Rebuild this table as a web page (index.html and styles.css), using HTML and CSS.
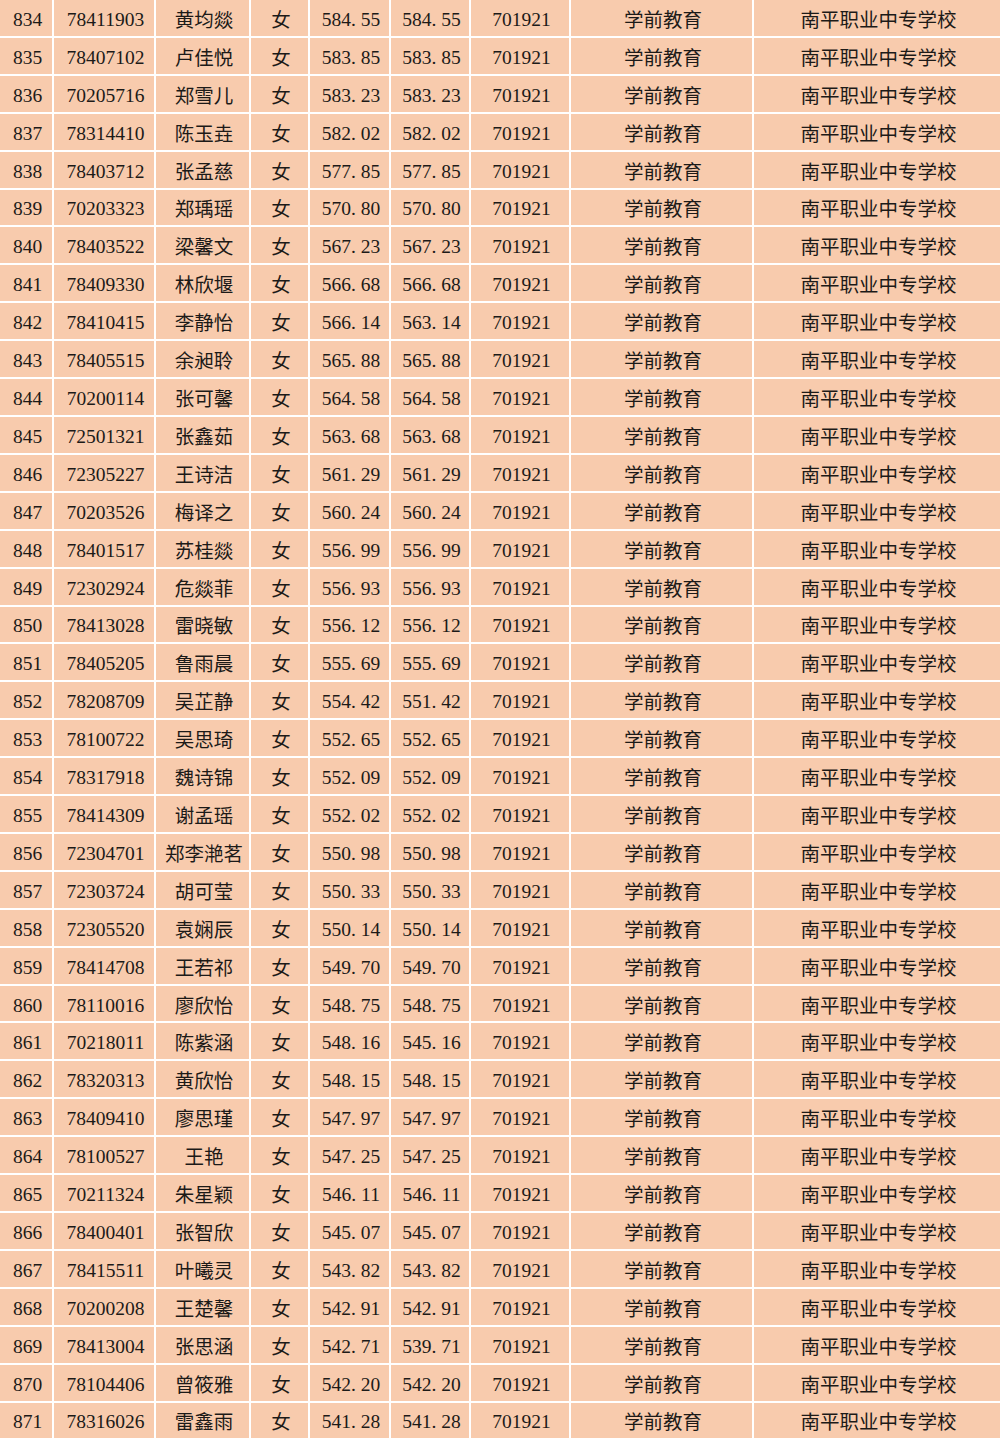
FILE: index.html
```html
<!DOCTYPE html>
<html lang="zh-CN">
<head>
<meta charset="utf-8">
<title>录取名单</title>
<link rel="stylesheet" href="styles.css">
</head>
<body>
<div class="sheet">
<div class="c n">834</div><div class="c n">78411903</div><div class="c z">黄均燚</div><div class="c z">女</div><div class="c n">584<span class="p">.</span>55</div><div class="c n">584<span class="p">.</span>55</div><div class="c n">701921</div><div class="c z">学前教育</div><div class="c z">南平职业中专学校</div>
<div class="c n">835</div><div class="c n">78407102</div><div class="c z">卢佳悦</div><div class="c z">女</div><div class="c n">583<span class="p">.</span>85</div><div class="c n">583<span class="p">.</span>85</div><div class="c n">701921</div><div class="c z">学前教育</div><div class="c z">南平职业中专学校</div>
<div class="c n">836</div><div class="c n">70205716</div><div class="c z">郑雪儿</div><div class="c z">女</div><div class="c n">583<span class="p">.</span>23</div><div class="c n">583<span class="p">.</span>23</div><div class="c n">701921</div><div class="c z">学前教育</div><div class="c z">南平职业中专学校</div>
<div class="c n">837</div><div class="c n">78314410</div><div class="c z">陈玉垚</div><div class="c z">女</div><div class="c n">582<span class="p">.</span>02</div><div class="c n">582<span class="p">.</span>02</div><div class="c n">701921</div><div class="c z">学前教育</div><div class="c z">南平职业中专学校</div>
<div class="c n">838</div><div class="c n">78403712</div><div class="c z">张孟慈</div><div class="c z">女</div><div class="c n">577<span class="p">.</span>85</div><div class="c n">577<span class="p">.</span>85</div><div class="c n">701921</div><div class="c z">学前教育</div><div class="c z">南平职业中专学校</div>
<div class="c n">839</div><div class="c n">70203323</div><div class="c z">郑瑀瑶</div><div class="c z">女</div><div class="c n">570<span class="p">.</span>80</div><div class="c n">570<span class="p">.</span>80</div><div class="c n">701921</div><div class="c z">学前教育</div><div class="c z">南平职业中专学校</div>
<div class="c n">840</div><div class="c n">78403522</div><div class="c z">梁馨文</div><div class="c z">女</div><div class="c n">567<span class="p">.</span>23</div><div class="c n">567<span class="p">.</span>23</div><div class="c n">701921</div><div class="c z">学前教育</div><div class="c z">南平职业中专学校</div>
<div class="c n">841</div><div class="c n">78409330</div><div class="c z">林欣堰</div><div class="c z">女</div><div class="c n">566<span class="p">.</span>68</div><div class="c n">566<span class="p">.</span>68</div><div class="c n">701921</div><div class="c z">学前教育</div><div class="c z">南平职业中专学校</div>
<div class="c n">842</div><div class="c n">78410415</div><div class="c z">李静怡</div><div class="c z">女</div><div class="c n">566<span class="p">.</span>14</div><div class="c n">563<span class="p">.</span>14</div><div class="c n">701921</div><div class="c z">学前教育</div><div class="c z">南平职业中专学校</div>
<div class="c n">843</div><div class="c n">78405515</div><div class="c z">余昶聆</div><div class="c z">女</div><div class="c n">565<span class="p">.</span>88</div><div class="c n">565<span class="p">.</span>88</div><div class="c n">701921</div><div class="c z">学前教育</div><div class="c z">南平职业中专学校</div>
<div class="c n">844</div><div class="c n">70200114</div><div class="c z">张可馨</div><div class="c z">女</div><div class="c n">564<span class="p">.</span>58</div><div class="c n">564<span class="p">.</span>58</div><div class="c n">701921</div><div class="c z">学前教育</div><div class="c z">南平职业中专学校</div>
<div class="c n">845</div><div class="c n">72501321</div><div class="c z">张鑫茹</div><div class="c z">女</div><div class="c n">563<span class="p">.</span>68</div><div class="c n">563<span class="p">.</span>68</div><div class="c n">701921</div><div class="c z">学前教育</div><div class="c z">南平职业中专学校</div>
<div class="c n">846</div><div class="c n">72305227</div><div class="c z">王诗洁</div><div class="c z">女</div><div class="c n">561<span class="p">.</span>29</div><div class="c n">561<span class="p">.</span>29</div><div class="c n">701921</div><div class="c z">学前教育</div><div class="c z">南平职业中专学校</div>
<div class="c n">847</div><div class="c n">70203526</div><div class="c z">梅译之</div><div class="c z">女</div><div class="c n">560<span class="p">.</span>24</div><div class="c n">560<span class="p">.</span>24</div><div class="c n">701921</div><div class="c z">学前教育</div><div class="c z">南平职业中专学校</div>
<div class="c n">848</div><div class="c n">78401517</div><div class="c z">苏桂燚</div><div class="c z">女</div><div class="c n">556<span class="p">.</span>99</div><div class="c n">556<span class="p">.</span>99</div><div class="c n">701921</div><div class="c z">学前教育</div><div class="c z">南平职业中专学校</div>
<div class="c n">849</div><div class="c n">72302924</div><div class="c z">危燚菲</div><div class="c z">女</div><div class="c n">556<span class="p">.</span>93</div><div class="c n">556<span class="p">.</span>93</div><div class="c n">701921</div><div class="c z">学前教育</div><div class="c z">南平职业中专学校</div>
<div class="c n">850</div><div class="c n">78413028</div><div class="c z">雷晓敏</div><div class="c z">女</div><div class="c n">556<span class="p">.</span>12</div><div class="c n">556<span class="p">.</span>12</div><div class="c n">701921</div><div class="c z">学前教育</div><div class="c z">南平职业中专学校</div>
<div class="c n">851</div><div class="c n">78405205</div><div class="c z">鲁雨晨</div><div class="c z">女</div><div class="c n">555<span class="p">.</span>69</div><div class="c n">555<span class="p">.</span>69</div><div class="c n">701921</div><div class="c z">学前教育</div><div class="c z">南平职业中专学校</div>
<div class="c n">852</div><div class="c n">78208709</div><div class="c z">吴芷静</div><div class="c z">女</div><div class="c n">554<span class="p">.</span>42</div><div class="c n">551<span class="p">.</span>42</div><div class="c n">701921</div><div class="c z">学前教育</div><div class="c z">南平职业中专学校</div>
<div class="c n">853</div><div class="c n">78100722</div><div class="c z">吴思琦</div><div class="c z">女</div><div class="c n">552<span class="p">.</span>65</div><div class="c n">552<span class="p">.</span>65</div><div class="c n">701921</div><div class="c z">学前教育</div><div class="c z">南平职业中专学校</div>
<div class="c n">854</div><div class="c n">78317918</div><div class="c z">魏诗锦</div><div class="c z">女</div><div class="c n">552<span class="p">.</span>09</div><div class="c n">552<span class="p">.</span>09</div><div class="c n">701921</div><div class="c z">学前教育</div><div class="c z">南平职业中专学校</div>
<div class="c n">855</div><div class="c n">78414309</div><div class="c z">谢孟瑶</div><div class="c z">女</div><div class="c n">552<span class="p">.</span>02</div><div class="c n">552<span class="p">.</span>02</div><div class="c n">701921</div><div class="c z">学前教育</div><div class="c z">南平职业中专学校</div>
<div class="c n">856</div><div class="c n">72304701</div><div class="c z">郑李滟茗</div><div class="c z">女</div><div class="c n">550<span class="p">.</span>98</div><div class="c n">550<span class="p">.</span>98</div><div class="c n">701921</div><div class="c z">学前教育</div><div class="c z">南平职业中专学校</div>
<div class="c n">857</div><div class="c n">72303724</div><div class="c z">胡可莹</div><div class="c z">女</div><div class="c n">550<span class="p">.</span>33</div><div class="c n">550<span class="p">.</span>33</div><div class="c n">701921</div><div class="c z">学前教育</div><div class="c z">南平职业中专学校</div>
<div class="c n">858</div><div class="c n">72305520</div><div class="c z">袁娴辰</div><div class="c z">女</div><div class="c n">550<span class="p">.</span>14</div><div class="c n">550<span class="p">.</span>14</div><div class="c n">701921</div><div class="c z">学前教育</div><div class="c z">南平职业中专学校</div>
<div class="c n">859</div><div class="c n">78414708</div><div class="c z">王若祁</div><div class="c z">女</div><div class="c n">549<span class="p">.</span>70</div><div class="c n">549<span class="p">.</span>70</div><div class="c n">701921</div><div class="c z">学前教育</div><div class="c z">南平职业中专学校</div>
<div class="c n">860</div><div class="c n">78110016</div><div class="c z">廖欣怡</div><div class="c z">女</div><div class="c n">548<span class="p">.</span>75</div><div class="c n">548<span class="p">.</span>75</div><div class="c n">701921</div><div class="c z">学前教育</div><div class="c z">南平职业中专学校</div>
<div class="c n">861</div><div class="c n">70218011</div><div class="c z">陈紫涵</div><div class="c z">女</div><div class="c n">548<span class="p">.</span>16</div><div class="c n">545<span class="p">.</span>16</div><div class="c n">701921</div><div class="c z">学前教育</div><div class="c z">南平职业中专学校</div>
<div class="c n">862</div><div class="c n">78320313</div><div class="c z">黄欣怡</div><div class="c z">女</div><div class="c n">548<span class="p">.</span>15</div><div class="c n">548<span class="p">.</span>15</div><div class="c n">701921</div><div class="c z">学前教育</div><div class="c z">南平职业中专学校</div>
<div class="c n">863</div><div class="c n">78409410</div><div class="c z">廖思瑾</div><div class="c z">女</div><div class="c n">547<span class="p">.</span>97</div><div class="c n">547<span class="p">.</span>97</div><div class="c n">701921</div><div class="c z">学前教育</div><div class="c z">南平职业中专学校</div>
<div class="c n">864</div><div class="c n">78100527</div><div class="c z">王艳</div><div class="c z">女</div><div class="c n">547<span class="p">.</span>25</div><div class="c n">547<span class="p">.</span>25</div><div class="c n">701921</div><div class="c z">学前教育</div><div class="c z">南平职业中专学校</div>
<div class="c n">865</div><div class="c n">70211324</div><div class="c z">朱星颖</div><div class="c z">女</div><div class="c n">546<span class="p">.</span>11</div><div class="c n">546<span class="p">.</span>11</div><div class="c n">701921</div><div class="c z">学前教育</div><div class="c z">南平职业中专学校</div>
<div class="c n">866</div><div class="c n">78400401</div><div class="c z">张智欣</div><div class="c z">女</div><div class="c n">545<span class="p">.</span>07</div><div class="c n">545<span class="p">.</span>07</div><div class="c n">701921</div><div class="c z">学前教育</div><div class="c z">南平职业中专学校</div>
<div class="c n">867</div><div class="c n">78415511</div><div class="c z">叶曦灵</div><div class="c z">女</div><div class="c n">543<span class="p">.</span>82</div><div class="c n">543<span class="p">.</span>82</div><div class="c n">701921</div><div class="c z">学前教育</div><div class="c z">南平职业中专学校</div>
<div class="c n">868</div><div class="c n">70200208</div><div class="c z">王楚馨</div><div class="c z">女</div><div class="c n">542<span class="p">.</span>91</div><div class="c n">542<span class="p">.</span>91</div><div class="c n">701921</div><div class="c z">学前教育</div><div class="c z">南平职业中专学校</div>
<div class="c n">869</div><div class="c n">78413004</div><div class="c z">张思涵</div><div class="c z">女</div><div class="c n">542<span class="p">.</span>71</div><div class="c n">539<span class="p">.</span>71</div><div class="c n">701921</div><div class="c z">学前教育</div><div class="c z">南平职业中专学校</div>
<div class="c n">870</div><div class="c n">78104406</div><div class="c z">曾筱雅</div><div class="c z">女</div><div class="c n">542<span class="p">.</span>20</div><div class="c n">542<span class="p">.</span>20</div><div class="c n">701921</div><div class="c z">学前教育</div><div class="c z">南平职业中专学校</div>
<div class="c n">871</div><div class="c n">78316026</div><div class="c z">雷鑫雨</div><div class="c z">女</div><div class="c n">541<span class="p">.</span>28</div><div class="c n">541<span class="p">.</span>28</div><div class="c n">701921</div><div class="c z">学前教育</div><div class="c z">南平职业中专学校</div>
</div>
</body>
</html>
```

FILE: styles.css
```css
html, body {
  margin: 0;
  padding: 0;
  background: #ffffff;
}

.sheet {
  display: grid;
  grid-template-columns: 52px 100px 93px 57px 79px 78px 98px 181px 1fr;
  grid-auto-rows: 35.92px;
  gap: 2px;
  width: 1000px;
  padding-bottom: 2px;
  background: #ffffff;
}

.c {
  background: #f8cbad;
  color: #1c1a18;
  display: flex;
  align-items: center;
  justify-content: center;
  padding-left: 3px;
  white-space: nowrap;
  overflow: hidden;
  box-sizing: border-box;
}

.n {
  font-family: "Liberation Serif", "Times New Roman", serif;
  font-size: 19.5px;
  padding-top: 4px;
}

.z {
  font-family: "Noto Sans CJK SC", "Noto Sans", sans-serif;
  font-size: 19.5px;
  font-weight: 400;
  padding-top: 1px;
}

.p {
  margin-right: 0.25em;
}
```
